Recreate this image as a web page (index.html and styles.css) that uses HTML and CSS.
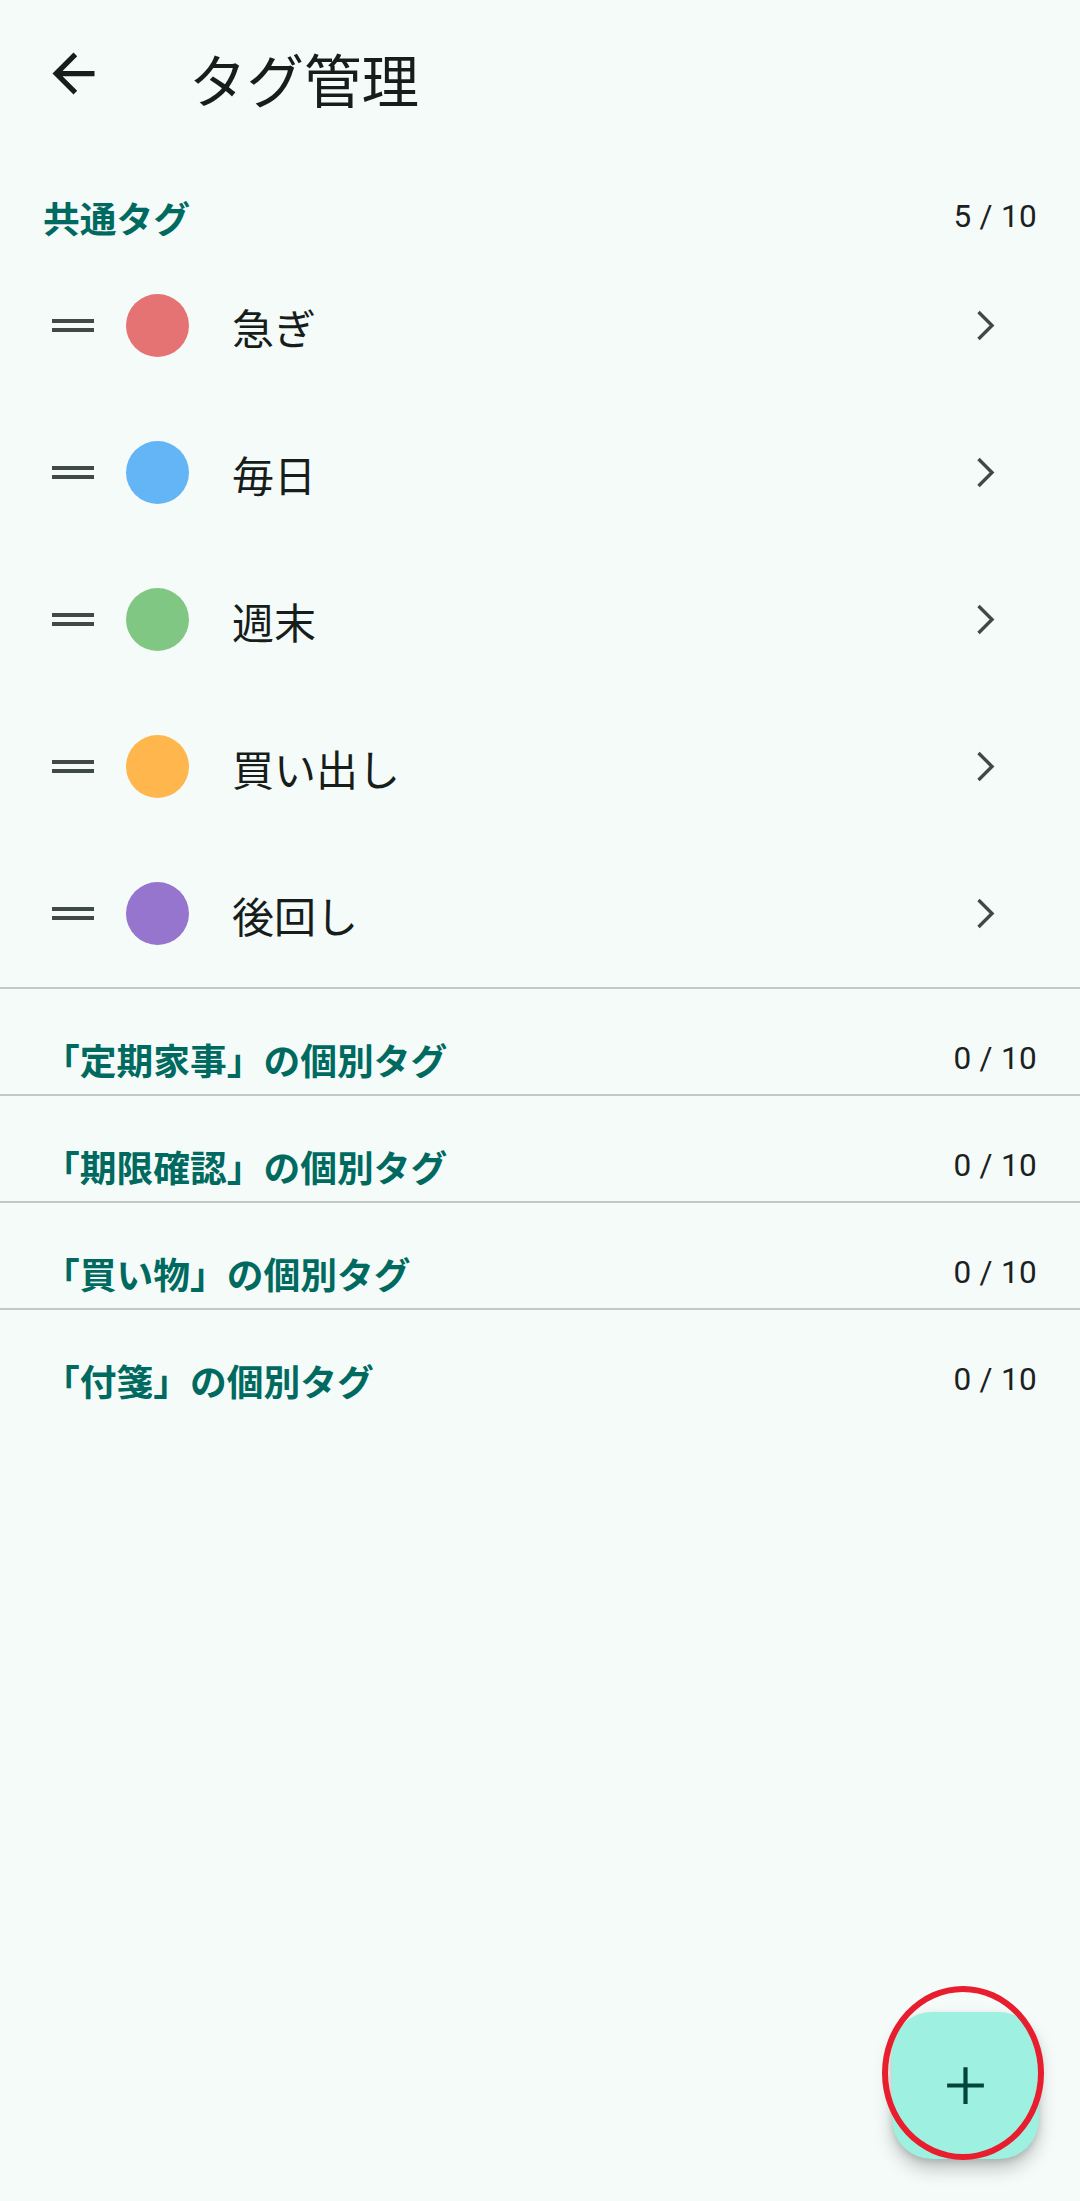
FILE: index.html
```html
<!DOCTYPE html>
<html lang="ja">
<head>
<meta charset="utf-8">
<title>タグ管理</title>
<link rel="stylesheet" href="styles.css">
</head>
<body>
<div class="screen">
  <header class="toolbar">
    <button class="icon-btn back" aria-label="戻る">
      <svg viewBox="0 0 24 24" width="63" height="63"><path d="M20 11H7.83l5.59-5.59L12 4l-8 8 8 8 1.41-1.41L7.83 13H20v-2z"/></svg>
    </button>
    <h1 class="title">タグ管理</h1>
  </header>

  <section class="section">
    <div class="section-header first">
      <span class="section-title">共通タグ</span>
      <span class="count">5 / 10</span>
    </div>
    <ul class="tag-list">
      <li class="tag-row">
        <span class="handle"><i></i><i></i></span>
        <span class="dot red"></span>
        <span class="label">急ぎ</span>
        <svg class="chevron" viewBox="0 0 63 63" width="63" height="63"><polyline points="24.5,18 38,31.5 24.5,45"/></svg>
      </li>
      <li class="tag-row">
        <span class="handle"><i></i><i></i></span>
        <span class="dot blue"></span>
        <span class="label">毎日</span>
        <svg class="chevron" viewBox="0 0 63 63" width="63" height="63"><polyline points="24.5,18 38,31.5 24.5,45"/></svg>
      </li>
      <li class="tag-row">
        <span class="handle"><i></i><i></i></span>
        <span class="dot green"></span>
        <span class="label">週末</span>
        <svg class="chevron" viewBox="0 0 63 63" width="63" height="63"><polyline points="24.5,18 38,31.5 24.5,45"/></svg>
      </li>
      <li class="tag-row">
        <span class="handle"><i></i><i></i></span>
        <span class="dot orange"></span>
        <span class="label">買い出し</span>
        <svg class="chevron" viewBox="0 0 63 63" width="63" height="63"><polyline points="24.5,18 38,31.5 24.5,45"/></svg>
      </li>
      <li class="tag-row">
        <span class="handle"><i></i><i></i></span>
        <span class="dot purple"></span>
        <span class="label">後回し</span>
        <svg class="chevron" viewBox="0 0 63 63" width="63" height="63"><polyline points="24.5,18 38,31.5 24.5,45"/></svg>
      </li>
    </ul>
  </section>

  <section class="section divided">
    <div class="section-header">
      <span class="section-title">「定期家事」の個別タグ</span>
      <span class="count">0 / 10</span>
    </div>
  </section>
  <section class="section divided">
    <div class="section-header">
      <span class="section-title">「期限確認」の個別タグ</span>
      <span class="count">0 / 10</span>
    </div>
  </section>
  <section class="section divided">
    <div class="section-header">
      <span class="section-title">「買い物」の個別タグ</span>
      <span class="count">0 / 10</span>
    </div>
  </section>
  <section class="section divided">
    <div class="section-header">
      <span class="section-title">「付箋」の個別タグ</span>
      <span class="count">0 / 10</span>
    </div>
  </section>

  <button class="fab" aria-label="追加">
    <svg viewBox="0 0 24 24" width="63" height="63"><path d="M19 12.8h-6.2V19h-1.6v-6.2H5v-1.6h6.2V5h1.6v6.2H19v1.6z"/></svg>
  </button>
  <div class="highlight"></div>
</div>
</body>
</html>
```

FILE: styles.css
```css
* { box-sizing: border-box; }

html, body {
  margin: 0;
  padding: 0;
  background: #f4fbf8;
}

body {
  font-family: Roboto, "Noto Sans CJK JP", sans-serif;
  color: #171d1b;
}

.screen {
  position: relative;
  width: 1080px;
  height: 2201px;
  overflow: hidden;
  background: #f4fbf8;
}

/* Toolbar */
.toolbar {
  height: 147px;
  display: flex;
  align-items: center;
}

.icon-btn {
  border: 0;
  background: none;
  padding: 0;
  margin: 0;
  display: flex;
  cursor: pointer;
}

.back {
  margin-left: 42px;
  width: 63px;
  height: 63px;
}

.back svg { fill: #171d1b; }

.title {
  margin: 0 0 0 84px;
  font-family: "Noto Sans CJK JP", sans-serif;
  font-size: 57.5px;
  font-weight: 400;
  line-height: 68px;
  color: #171d1b;
  padding-top: 8px;
}

/* Sections */
.section.divided {
  border-top: 2.6px solid #bfc9c5;
}

.section-header {
  display: flex;
  justify-content: space-between;
  align-items: center;
  height: 105px;
  padding: 44px 43px 9px 43px;
}

.section-title {
  font-family: "Noto Sans CJK JP", sans-serif;
  font-weight: 700;
  font-size: 36.75px;
  line-height: 52px;
  color: #006a60;
}

.count {
  font-family: Roboto, sans-serif;
  font-size: 31.5px;
  line-height: 52px;
  color: #1c211f;
  letter-spacing: 0.3px;
}

/* Tag rows */
.tag-list {
  list-style: none;
  margin: 0;
  padding: 0;
}

.tag-row {
  height: 147px;
  display: flex;
  align-items: center;
  padding-left: 52px;
  padding-right: 63px;
}

.handle {
  width: 42px;
  display: flex;
  flex-direction: column;
  gap: 5px;
}

.handle i {
  display: block;
  height: 4.4px;
  background: #3f4946;
}

.dot {
  width: 63px;
  height: 63px;
  border-radius: 50%;
  margin-left: 32px;
  flex: none;
}

.dot.red { background: #e57373; }
.dot.blue { background: #64b5f6; }
.dot.green { background: #81c784; }
.dot.orange { background: #ffb74d; }
.dot.purple { background: #9575cd; }

.label {
  flex: 1;
  margin-left: 43px;
  font-family: "Noto Sans CJK JP", sans-serif;
  font-size: 42px;
  line-height: 56px;
  color: #171d1b;
  padding-top: 3px;
}

.chevron {
  flex: none;
  fill: none;
  stroke: #3f4946;
  stroke-width: 3.4;
  stroke-linecap: butt;
  stroke-linejoin: miter;
}

/* FAB */
.fab {
  position: absolute;
  left: 892px;
  top: 2012px;
  width: 147px;
  height: 147px;
  border: 0;
  border-radius: 40px;
  background: #9ef1e0;
  display: flex;
  align-items: center;
  justify-content: center;
  padding: 0;
  box-shadow: 0 10px 18px rgba(0, 0, 0, 0.22), 0 3px 6px rgba(0, 0, 0, 0.12);
}

.fab svg { fill: #00453d; }

.highlight {
  position: absolute;
  left: 882px;
  top: 1986px;
  width: 162px;
  height: 174px;
  border: 6px solid #e81d2d;
  border-radius: 50%;
  pointer-events: none;
}
```
